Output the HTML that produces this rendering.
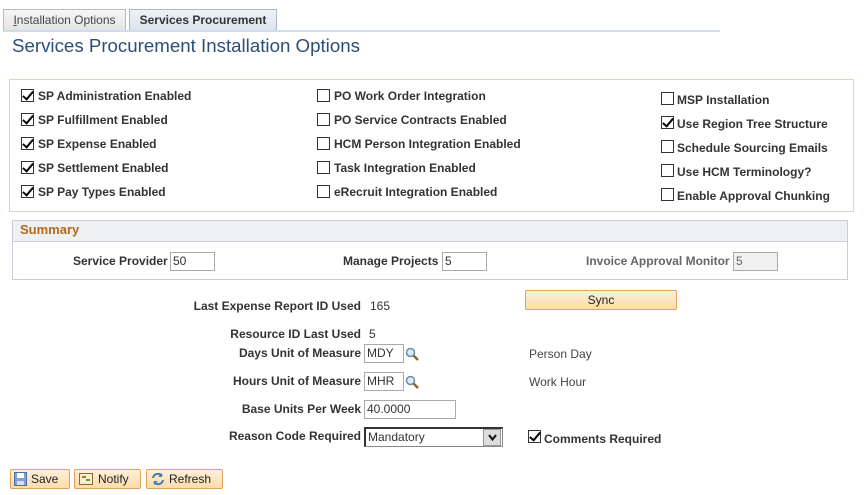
<!DOCTYPE html>
<html><head><meta charset="utf-8"><style>
*{margin:0;padding:0;box-sizing:border-box}
body{width:864px;height:495px;background:#fff;font-family:"Liberation Sans",Arial,sans-serif;font-size:12px;color:#333;position:relative;overflow:hidden}
.a{position:absolute;white-space:nowrap}
.b{font-weight:bold;color:#333}
.cb{position:absolute;width:13px;height:13px;border:1px solid #333;background:#fff}
.cb.on::after{content:"";position:absolute;left:3px;top:-1px;width:4px;height:9px;border:solid #000;border-width:0 2px 2px 0;transform:rotate(40deg)}
.inp{position:absolute;height:19px;border:1px solid #aaa;background:#fff;font-size:12px;color:#333;padding:1px 2px;line-height:15px}
.btn{position:absolute;height:20px;border:1px solid #e0a35a;border-radius:2px;background:linear-gradient(#fdf0da,#fbdcaa);font-size:12px;line-height:18px;color:#222}
.mag{position:absolute;width:14px;height:14px}
</style></head><body>
<div class="a" style="left:3px;top:9px;width:123px;height:21px;border:1px solid #bbb;border-bottom:none;background:linear-gradient(#f6f6f6,#e4e4e4);color:#444;font-size:12px;line-height:20px;text-align:center"><u>I</u>nstallation Options</div>
<div class="a" style="left:129px;top:9px;width:148px;height:21px;border:1px solid #aab8cc;border-bottom:none;background:linear-gradient(#eef2f7,#dce4ee);color:#333;font-weight:bold;font-size:12px;line-height:20px;text-align:center">Services Procurement</div>
<div class="a" style="left:3px;top:30px;width:717px;height:2px;background:#d2dcea"></div>
<div class="a" style="left:12px;top:35px;font-size:18.7px;color:#2d4e78">Services Procurement Installation Options</div>
<div class="a" style="left:9px;top:79px;width:845px;height:133px;border:1px solid #e0d5b5"></div>
<div class="cb on" style="left:21px;top:89px"></div><div class="a b" style="left:38px;top:89px">SP Administration Enabled</div>
<div class="cb on" style="left:21px;top:113px"></div><div class="a b" style="left:38px;top:113px">SP Fulfillment Enabled</div>
<div class="cb on" style="left:21px;top:137px"></div><div class="a b" style="left:38px;top:137px">SP Expense Enabled</div>
<div class="cb on" style="left:21px;top:161px"></div><div class="a b" style="left:38px;top:161px">SP Settlement Enabled</div>
<div class="cb on" style="left:21px;top:185px"></div><div class="a b" style="left:38px;top:185px">SP Pay Types Enabled</div>
<div class="cb" style="left:317px;top:89px"></div><div class="a b" style="left:334px;top:89px">PO Work Order Integration</div>
<div class="cb" style="left:317px;top:113px"></div><div class="a b" style="left:334px;top:113px">PO Service Contracts Enabled</div>
<div class="cb" style="left:317px;top:137px"></div><div class="a b" style="left:334px;top:137px">HCM Person Integration Enabled</div>
<div class="cb" style="left:317px;top:161px"></div><div class="a b" style="left:334px;top:161px">Task Integration Enabled</div>
<div class="cb" style="left:317px;top:185px"></div><div class="a b" style="left:334px;top:185px">eRecruit Integration Enabled</div>
<div class="cb" style="left:661px;top:92px"></div><div class="a b" style="left:677px;top:93px">MSP Installation</div>
<div class="cb on" style="left:661px;top:116px"></div><div class="a b" style="left:677px;top:117px">Use Region Tree Structure</div>
<div class="cb" style="left:661px;top:140px"></div><div class="a b" style="left:677px;top:141px">Schedule Sourcing Emails</div>
<div class="cb" style="left:661px;top:164px"></div><div class="a b" style="left:677px;top:165px">Use HCM Terminology?</div>
<div class="cb" style="left:661px;top:188px"></div><div class="a b" style="left:677px;top:189px">Enable Approval Chunking</div>
<div class="a" style="left:12px;top:220px;width:836px;height:60px;border:1px solid #ccd"></div>
<div class="a" style="left:13px;top:221px;width:834px;height:21px;background:#eef0f2;border-bottom:1px solid #ccd"></div>
<div class="a" style="left:20px;top:222px;font-weight:bold;font-size:13px;color:#b5661e">Summary</div>
<div class="a b" style="left:73px;top:254px">Service Provider</div><div class="inp" style="left:170px;top:252px;width:45px">50</div>
<div class="a b" style="left:343px;top:254px">Manage Projects</div><div class="inp" style="left:442px;top:252px;width:45px">5</div>
<div class="a b" style="left:586px;top:254px;color:#666">Invoice Approval Monitor</div><div class="inp" style="left:733px;top:252px;width:45px;background:#f0f0f0;color:#666">5</div>
<div class="a b" style="right:503px;top:299px">Last Expense Report ID Used</div><div class="a" style="left:370px;top:299px">165</div>
<div class="btn" style="left:525px;top:290px;width:152px;text-align:center">Sync</div>
<div class="a b" style="right:503px;top:327px">Resource ID Last Used</div><div class="a" style="left:369px;top:327px">5</div>
<div class="a b" style="right:503px;top:346px">Days Unit of Measure</div><div class="inp" style="left:364px;top:344px;width:40px">MDY</div>
<svg class="mag" style="left:405px;top:347px" viewBox="0 0 14 14"><circle cx="5.5" cy="5.5" r="4" fill="#dfeaf5" stroke="#6a8bb0" stroke-width="1.5"/><path d="M8.5 8.5L13 13" stroke="#8a6a2a" stroke-width="2.5"/></svg>
<div class="a" style="left:529px;top:347px;color:#444">Person Day</div>
<div class="a b" style="right:503px;top:374px">Hours Unit of Measure</div><div class="inp" style="left:364px;top:372px;width:40px">MHR</div>
<svg class="mag" style="left:405px;top:375px" viewBox="0 0 14 14"><circle cx="5.5" cy="5.5" r="4" fill="#dfeaf5" stroke="#6a8bb0" stroke-width="1.5"/><path d="M8.5 8.5L13 13" stroke="#8a6a2a" stroke-width="2.5"/></svg>
<div class="a" style="left:529px;top:375px;color:#444">Work Hour</div>
<div class="a b" style="right:503px;top:402px">Base Units Per Week</div><div class="inp" style="left:364px;top:400px;width:92px">40.0000</div>
<div class="a b" style="right:503px;top:429px">Reason Code Required</div>
<div class="a" style="left:364px;top:427px;width:139px;height:20px;border:1px solid #888;border-top:2px solid #333;border-left:2px solid #333;background:#fff;padding:1px 2px;font-size:12px;color:#333">Mandatory</div>
<div class="a" style="left:483px;top:429px;width:18px;height:17px;background:#ddd;border:1px solid #999"><svg style="position:absolute;left:4px;top:4px" width="9" height="7" viewBox="0 0 9 7"><path d="M1 1L4.5 5.5L8 1" fill="none" stroke="#111" stroke-width="2"/></svg></div>
<div class="cb on" style="left:528px;top:430px"></div><div class="a b" style="left:544px;top:432px">Comments Required</div>
<div class="btn" style="left:10px;top:469px;width:60px"><svg style="position:absolute;left:3px;top:2px" width="13" height="14" viewBox="0 0 13 14"><rect x="0.5" y="0.5" width="12" height="13" fill="#7ea3cf" stroke="#4a6f9f"/><rect x="3" y="1" width="7" height="5" fill="#fff"/><rect x="3" y="9" width="7" height="4" fill="#dde"/></svg><span style="position:absolute;left:20px">Save</span></div>
<div class="btn" style="left:74px;top:469px;width:67px"><svg style="position:absolute;left:4px;top:3px" width="14" height="12" viewBox="0 0 14 12"><rect x="0.5" y="0.5" width="13" height="11" fill="#f5efd0" stroke="#8a6a2a"/><rect x="3" y="3" width="4" height="2" fill="#b07a20"/><rect x="7" y="6" width="4" height="2" fill="#6a9a3a"/></svg><span style="position:absolute;left:23px">Notify</span></div>
<div class="btn" style="left:146px;top:469px;width:77px"><svg style="position:absolute;left:4px;top:2px" width="14" height="14" viewBox="0 0 14 14"><path d="M2 6A5 5 0 0 1 11 4" fill="none" stroke="#4a7ab0" stroke-width="2"/><path d="M12 8A5 5 0 0 1 3 10" fill="none" stroke="#4a7ab0" stroke-width="2"/><path d="M11 1v4h-4z" fill="#4a7ab0"/><path d="M3 13v-4h4z" fill="#4a7ab0"/></svg><span style="position:absolute;left:22px">Refresh</span></div>
</body></html>
